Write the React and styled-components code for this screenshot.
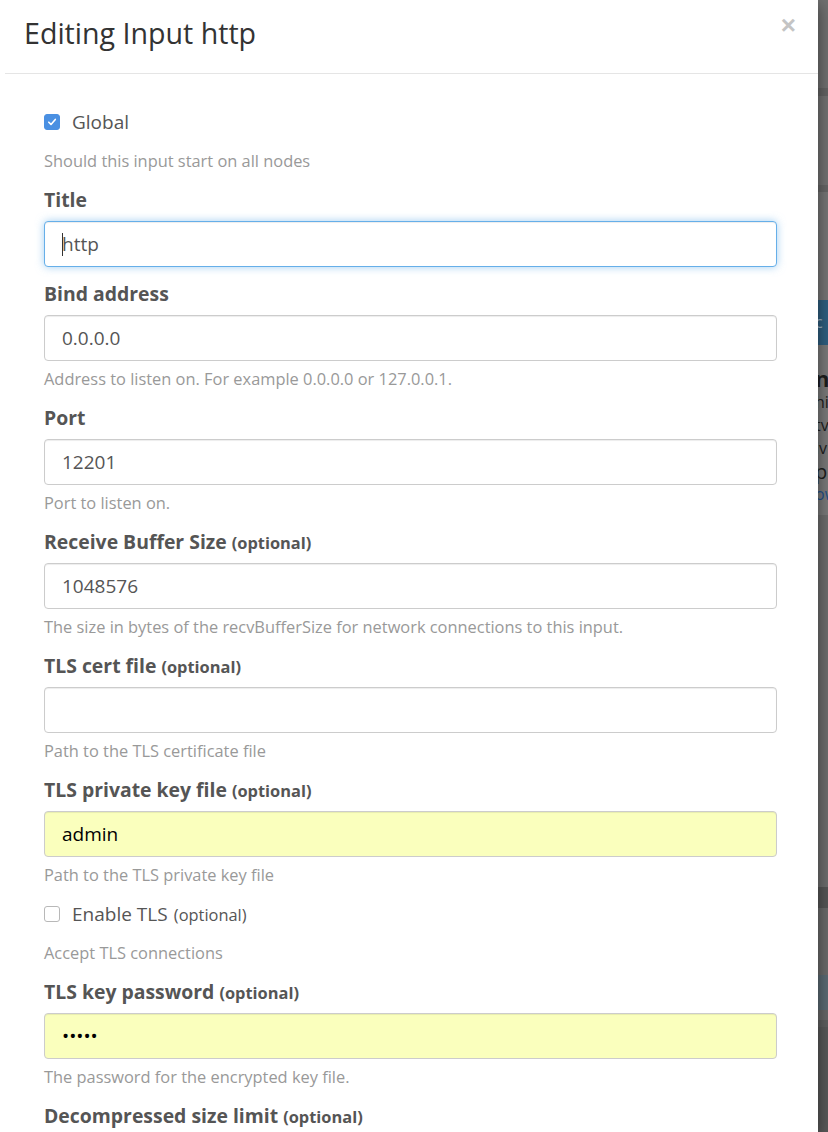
import React from 'react';
import styled, { createGlobalStyle } from 'styled-components';

const GlobalStyle = createGlobalStyle`
    html, body {
        margin: 0;
        padding: 0;
        background: #FFFFFF;
    }
    body {
        font-family: "Open Sans", "Noto Sans", sans-serif;
    }
    * {
        box-sizing: border-box;
    }
`;

const Screen = styled.div`
    display: flex;
    width: 828px;
    height: 1132px;
    overflow: hidden;
`;

const Modal = styled.div`
    width: 818px;
    flex-shrink: 0;
    background: #FFFFFF;
    box-shadow: 0 5px 15px rgba(0, 0, 0, 0.5);
    position: relative;
    z-index: 1;
    overflow: hidden;
`;

const Header = styled.div`
    display: flex;
    justify-content: space-between;
    align-items: flex-start;
    height: 74px;
    margin-left: 5px;
    padding: 17px 22px 0 19px;
    border-bottom: 1px solid #E5E5E5;
`;

const ModalTitle = styled.h4`
    margin: 0;
    font-size: 28.6px;
    font-weight: 400;
    line-height: 1.1;
    color: #333333;
`;

const Close = styled.button`
    border: none;
    background: transparent;
    padding: 0;
    margin-top: -5px;
    font-family: "Liberation Sans", Arial, sans-serif;
    font-size: 26px;
    font-weight: 700;
    line-height: 1;
    color: #C4C4C4;
    cursor: pointer;
`;

const Body = styled.div`
    padding: 35px 41px 0 44px;
`;

const FormGroup = styled.div`
    margin-bottom: ${p => (p.$tight ? '15px' : '16px')};
`;

const CheckGroup = styled.div`
    margin-top: -1px;
    margin-bottom: 16px;
`;

const CheckRow = styled.label`
    display: flex;
    align-items: center;
    gap: 12px;
    height: 26px;
    font-size: 19px;
    color: #555555;
    cursor: pointer;
`;

const Box = styled.span`
    width: 16px;
    height: 16px;
    border-radius: 3px;
    display: flex;
    align-items: center;
    justify-content: center;
    background: ${p => (p.$checked ? '#4A90E2' : '#FFFFFF')};
    border: 1px solid ${p => (p.$checked ? '#4A90E2' : '#B8B8B8')};
`;

const Label = styled.label`
    display: block;
    height: 24px;
    font-size: 19.4px;
    font-weight: 700;
    line-height: 24px;
    color: #555555;
    margin-bottom: 9px;
    white-space: nowrap;
`;

const Optional = styled.small`
    font-size: 16.4px;
    font-weight: 700;
    margin-left: 5px;
    color: #555555;
`;

const OptionalPlain = styled.small`
    font-size: 16.4px;
    margin-left: 2px;
    color: #555555;
`;

const InputWrap = styled.div`
    position: relative;
`;

const Input = styled.input`
    display: block;
    width: 100%;
    height: 46px;
    padding: 0 17px;
    font-family: inherit;
    font-size: 19px;
    color: ${p => (p.$autofill ? '#000000' : '#555555')};
    background: ${p => (p.$autofill ? '#FAFFBD' : '#FFFFFF')};
    border: 1px solid ${p => (p.$focus ? '#66AFE9' : '#CCCCCC')};
    border-radius: 4px;
    box-shadow: ${p => (p.$focus
        ? 'inset 0 1px 1px rgba(0,0,0,.075), 0 0 8px rgba(102,175,233,.6)'
        : 'inset 0 1px 1px rgba(0,0,0,.075)')};
    outline: none;
`;

const Caret = styled.span`
    position: absolute;
    left: 18px;
    top: 12px;
    width: 1px;
    height: 23px;
    background: #333333;
`;

const Help = styled.span`
    display: block;
    margin-top: ${p => (p.$loose ? '15px' : '7px')};
    font-size: 16.4px;
    line-height: 22px;
    color: #999999;
`;

const Backdrop = styled.div`
    flex: 1;
    display: flex;
    flex-direction: column;
    background: #6E6E6E;
    overflow: hidden;
`;

const Band = styled.div`
    height: ${p => p.$h}px;
    background: ${p => p.$c};
    flex-shrink: 0;
    overflow: hidden;
    white-space: nowrap;
`;

const Peek = styled.div`
    font-size: ${p => p.$size || 16}px;
    font-weight: ${p => p.$bold ? 700 : 400};
    line-height: ${p => p.$lh || 23}px;
    color: ${p => p.$c || '#1E1E1E'};
    margin-left: -3px;
`;

function CheckBox({ checked }) {
    return (
        <Box $checked={checked}>
            {checked && (
                <svg width="10" height="10" viewBox="0 0 10 10">
                    <path d="M1.8 5.2 L4 7.4 L8.3 2.4" fill="none" stroke="#FFFFFF" strokeWidth="1.6" strokeLinecap="round" strokeLinejoin="round" />
                </svg>
            )}
        </Box>
    );
}

function Field({ label, optional, value, help, focus, autofill, type = 'text' }) {
    return (
        <FormGroup $tight={!help}>
            <Label>
                {label}
                {optional && <Optional>(optional)</Optional>}
            </Label>
            <InputWrap>
                <Input type={type} defaultValue={value} readOnly $focus={focus} $autofill={autofill} />
                {focus && <Caret />}
            </InputWrap>
            {help && <Help>{help}</Help>}
        </FormGroup>
    );
}

function App() {
    return (
        <Screen>
            <GlobalStyle />
            <Modal>
                <Header>
                    <ModalTitle>Editing Input http</ModalTitle>
                    <Close aria-label="Close">×</Close>
                </Header>
                <Body>
                    <FormGroup>
                        <CheckRow>
                            <CheckBox checked />
                            Global
                        </CheckRow>
                        <Help $loose>Should this input start on all nodes</Help>
                    </FormGroup>
                    <Field label="Title" value="http" focus />
                    <Field label="Bind address" value="0.0.0.0" help="Address to listen on. For example 0.0.0.0 or 127.0.0.1." />
                    <Field label="Port" value="12201" help="Port to listen on." />
                    <Field label="Receive Buffer Size" optional value="1048576" help="The size in bytes of the recvBufferSize for network connections to this input." />
                    <Field label="TLS cert file" optional value="" help="Path to the TLS certificate file" />
                    <Field label="TLS private key file" optional value="admin" autofill help="Path to the TLS private key file" />
                    <CheckGroup>
                        <CheckRow>
                            <CheckBox />
                            <span>Enable TLS<OptionalPlain> (optional)</OptionalPlain></span>
                        </CheckRow>
                        <Help $loose>Accept TLS connections</Help>
                    </CheckGroup>
                    <Field label="TLS key password" optional value="admin" type="password" autofill help="The password for the encrypted key file." />
                    <FormGroup>
                        <Label>
                            Decompressed size limit
                            <Optional>(optional)</Optional>
                        </Label>
                    </FormGroup>
                </Body>
            </Modal>
            <Backdrop>
                <Band $h={88} $c="#707070" />
                <Band $h={8} $c="#646464" />
                <Band $h={89} $c="#727272" />
                <Band $h={7} $c="#666666" />
                <Band $h={108} $c="#767676" />
                <Band $h={45} $c="#2F5F80">
                    <Peek $c="#9FB7C8" $lh={45}>c</Peek>
                </Band>
                <Band $h={20} $c="#7A7A7A" />
                <Band $h={150} $c="#7A7A7A">
                    <Peek $size={22} $bold $lh={26}>n</Peek>
                    <Peek>hi</Peek>
                    <Peek>tv</Peek>
                    <Peek>iv</Peek>
                    <Peek $size={20}>p</Peek>
                    <Peek $c="#1F4F8A">ow</Peek>
                </Band>
                <Band $h={372} $c="#6D6D6D" />
                <Band $h={21} $c="#565656" />
                <Band $h={67} $c="#6A6A6A" />
                <Band $h={35} $c="#5B6A73" />
                <Band $h={10} $c="#686868" />
                <Band $h={7} $c="#5F5F5F" />
                <Band $h={105} $c="#595959" />
            </Backdrop>
        </Screen>
    );
}

export default App;
